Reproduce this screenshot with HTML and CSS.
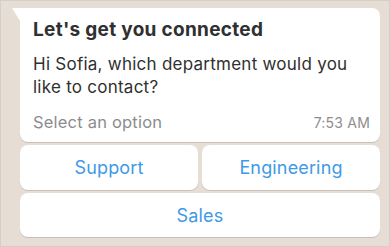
FILE: index.html
```html
<!DOCTYPE html>
<html>
<head>
<meta charset="utf-8">
<link rel="stylesheet" href="styles.css">
</head>
<body>
<div class="frame">
  <div class="bubble">
    <div class="title">Let's get you connected</div>
    <div class="body">Hi Sofia, which department would you like to contact?</div>
    <div class="footer">
      <span class="hint">Select an option</span>
      <span class="time">7:53 AM</span>
    </div>
  </div>
  <div class="buttons">
    <div class="btn">Support</div>
    <div class="btn">Engineering</div>
    <div class="btn wide">Sales</div>
  </div>
</div>
</body>
</html>
```
FILE: styles.css
```css
* { box-sizing: border-box; }
html, body { margin: 0; padding: 0; }
body { font-family: Inter, "Liberation Sans", Arial, sans-serif; }
.frame {
  width: 390px;
  height: 247px;
  background: #e6ded5;
  border: 1px solid #d4cfc9;
  padding: 7px 9px 0 19px;
}
.bubble {
  position: relative;
  background: #fff;
  border-radius: 0 8px 8px 8px;
  padding: 11px 10px 10px 13px;
  box-shadow: 0 1px 0.5px rgba(0,0,0,0.13);
}
.bubble::before {
  content: "";
  position: absolute;
  left: -8px;
  top: 0;
  width: 0;
  height: 0;
  border-top: 13px solid #fff;
  border-left: 8px solid transparent;
}
.title {
  font-size: 19px;
  line-height: 22px;
  font-weight: 700;
  letter-spacing: 0.3px;
  color: #303030;
}
.body {
  margin-top: 12px;
  font-size: 17px;
  line-height: 23px;
  letter-spacing: 0.25px;
  color: #303030;
}
.footer {
  margin-top: 13px;
  display: flex;
  justify-content: space-between;
  align-items: baseline;
}
.hint {
  font-size: 16.5px;
  line-height: 20px;
  letter-spacing: 0.2px;
  color: #8c8c8c;
}
.time {
  font-size: 14px;
  letter-spacing: 0.2px;
  color: #8e8e8e;
}
.buttons {
  margin-top: 3px;
  display: grid;
  grid-template-columns: 1fr 1fr;
  gap: 3px 4px;
}
.btn {
  height: 45px;
  background: #fff;
  border-radius: 8px;
  display: flex;
  align-items: center;
  justify-content: center;
  font-size: 18px;
  letter-spacing: 0.15px;
  color: #3f9ae6;
  box-shadow: 0 1px 0.5px rgba(0,0,0,0.13);
}
.wide { grid-column: 1 / 3; height: 44px; }
```
